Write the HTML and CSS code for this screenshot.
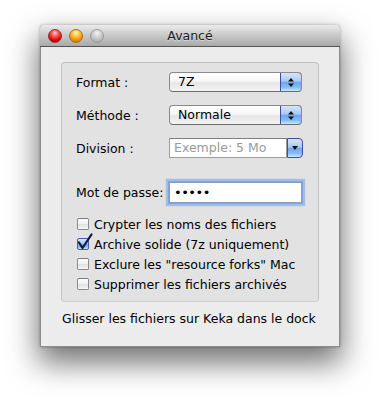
FILE: index.html
```html
<!DOCTYPE html>
<html lang="fr">
<head>
    <meta charset="UTF-8">
    <meta name="viewport" content="width=device-width, initial-scale=1.0">
    <title>Avancé</title>
    <link rel="stylesheet" href="styles.css">
</head>
<body>
    <div class="window">
        <div class="titlebar">
            <div class="lights">
                <span class="light close"></span>
                <span class="light mini"></span>
                <span class="light zoom"></span>
            </div>
            <div class="title">Avancé</div>
            <div></div>
        </div>
        <div class="content">
            <div class="group">
                <div class="row">
                    <span class="label">Format :</span>
                    <div class="popup">
                        <span class="popup-value">7Z</span>
                        <span class="stepper">
                            <svg width="8" height="11" viewBox="0 0 8 11"><path d="M4 1 L7 4.5 L1 4.5 Z M1 6.5 L7 6.5 L4 10 Z" fill="#111"/></svg>
                        </span>
                    </div>
                </div>
                <div class="row">
                    <span class="label">Méthode :</span>
                    <div class="popup">
                        <span class="popup-value">Normale</span>
                        <span class="stepper">
                            <svg width="8" height="11" viewBox="0 0 8 11"><path d="M4 1 L7 4.5 L1 4.5 Z M1 6.5 L7 6.5 L4 10 Z" fill="#111"/></svg>
                        </span>
                    </div>
                </div>
                <div class="row">
                    <span class="label">Division :</span>
                    <div class="combo">
                        <span class="combo-field">Exemple: 5 Mo</span>
                        <span class="combo-btn">
                            <svg width="8" height="6" viewBox="0 0 8 6"><path d="M1 1 L7 1 L4 5 Z" fill="#111"/></svg>
                        </span>
                    </div>
                </div>
                <div class="row row-pass">
                    <span class="label">Mot de passe:</span>
                    <input class="pass" type="password" value="abcde" readonly>
                </div>
                <div class="checks">
                    <label class="check"><span class="box"></span>Crypter les noms des fichiers</label>
                    <label class="check"><span class="box checked"><svg class="tick" width="20" height="20" viewBox="0 0 20 20"><path d="M5 10.5 L8.5 16 L17.5 2.5" fill="none" stroke="#101a3c" stroke-width="2.2" stroke-linecap="round" stroke-linejoin="round"/></svg></span>Archive solide (7z uniquement)</label>
                    <label class="check"><span class="box"></span>Exclure les "resource forks" Mac</label>
                    <label class="check"><span class="box"></span>Supprimer les fichiers archivés</label>
                </div>
            </div>
            <p class="hint">Glisser les fichiers sur Keka dans le dock</p>
        </div>
    </div>
</body>
</html>
```

FILE: styles.css
```css
body {
    font-family: "DejaVu Sans", Verdana, sans-serif;
    font-size: 12.5px;
    color: #000;
    background-color: #fff;
    margin: 0;
    padding: 25px 0 0 40px;
    min-height: 402px;
    box-sizing: border-box;
}

.window {
    width: 300px;
    height: 322px;
    box-sizing: border-box;
    background: #ececec;
    border: 1px solid #8c8c8c;
    border-top: none;
    border-radius: 4px 4px 0 0;
    box-shadow: 0 14px 30px 2px rgba(0, 0, 0, 0.55), 0 0 3px rgba(0, 0, 0, 0.3);
}

.titlebar {
    display: grid;
    grid-template-columns: 1fr auto 1fr;
    align-items: center;
    height: 21px;
    margin: 0 -1px;
    padding: 0 8px;
    background: linear-gradient(#ebebeb, #c8c8c8 50%, #a9a9a9);
    border-bottom: 1px solid #545454;
    border-radius: 4px 4px 0 0;
}

.lights {
    display: flex;
    gap: 7px;
}

.light {
    width: 14px;
    height: 14px;
    border-radius: 50%;
    box-sizing: border-box;
}

.light.close {
    background: radial-gradient(circle at 50% 25%, #ffd0d0 0, #ff5a5a 30%, #d10000 70%, #8e0000 100%);
    border: 1px solid #9a2a2a;
}

.light.mini {
    background: radial-gradient(circle at 50% 25%, #fff0c0 0, #ffc23a 35%, #e08400 75%, #a05a00 100%);
    border: 1px solid #a8701a;
}

.light.zoom {
    background: radial-gradient(circle at 50% 25%, #f4f4f4 0, #d4d4d4 35%, #b4b4b4 75%, #8e8e8e 100%);
    border: 1px solid #9a9a9a;
}

.title {
    font-size: 12.5px;
    color: #1c1c1c;
    text-shadow: 0 1px 0 rgba(255, 255, 255, 0.4);
}

.content {
    padding: 15px 20px 0;
}

.group {
    height: 240px;
    box-sizing: border-box;
    padding: 9px 15px 7px 14px;
    background: #e2e2e2;
    border: 1px solid #c2c2c2;
    border-bottom-color: #d0d0d0;
    border-radius: 4px;
}

.row {
    display: flex;
    align-items: center;
    height: 20px;
    margin-bottom: 13px;
}

.row:nth-child(3) {
    margin-bottom: 24px;
}

.row-pass {
    height: 21px;
    margin-bottom: 11px;
}

.label {
    width: 93px;
    flex-shrink: 0;
}

.popup {
    display: flex;
    width: 133px;
    height: 20px;
    box-sizing: border-box;
    border: 1px solid #8a8a8a;
    border-bottom-color: #6c6c6c;
    border-radius: 4px;
    background: linear-gradient(#ffffff, #f6f6f6 45%, #e6e6e6 55%, #f4f4f4);
    overflow: hidden;
}

.popup-value {
    flex: 1;
    padding-left: 8px;
    line-height: 18px;
}

.stepper, .combo-btn {
    display: flex;
    align-items: center;
    justify-content: center;
    width: 20px;
    background: linear-gradient(#d6e6fb, #a8c9f3 45%, #6fa6ec 52%, #86bdf5 80%, #c6ecff);
    border-left: 1px solid #6a7fb8;
}

.popup .stepper {
    margin: -1px -1px -1px 0;
    border: 1px solid #4747a6;
    border-radius: 0 4px 4px 0;
}

.combo {
    display: flex;
    width: 134px;
    height: 20px;
}

.combo-field {
    flex: 1;
    box-sizing: border-box;
    padding-left: 4px;
    line-height: 18px;
    color: #9a9a9a;
    background: #fff;
    border: 1px solid #9d9d9d;
    border-top-color: #7d7d7d;
}

.combo-btn {
    width: 16px;
    box-sizing: border-box;
    border: 1px solid #4747a6;
    border-radius: 0 4px 4px 0;
}

.pass {
    width: 133px;
    height: 21px;
    box-sizing: border-box;
    margin: 0;
    padding: 0 4px;
    font-family: "DejaVu Sans", Verdana, sans-serif;
    font-size: 13px;
    letter-spacing: -0.5px;
    color: #000;
    background: #fff;
    border: 1px solid #8a9cc0;
    box-shadow: 0 0 0 1px #7fa6e0, 0 0 1px 3px rgba(110, 160, 230, 0.55);
    outline: none;
}

.checks {
    display: flex;
    flex-direction: column;
}

.check {
    display: flex;
    align-items: center;
    height: 20px;
}

.box {
    position: relative;
    width: 12px;
    height: 12px;
    box-sizing: border-box;
    margin: 0 5px 0 1px;
    border: 1px solid #8a8a8a;
    border-top-color: #7a7a7a;
    border-radius: 2px;
    background: linear-gradient(#fdfdfd, #f0f0f0 50%, #e2e2e2 55%, #f6f6f6);
}

.box.checked {
    border-color: #4c5ca8;
    background: linear-gradient(#d6e6fb, #a8c9f3 45%, #6fa6ec 52%, #86bdf5 80%, #c6ecff);
}

.tick {
    position: absolute;
    left: -4px;
    top: -7px;
}

.hint {
    margin: 9px 0 0 1px;
    line-height: 16px;
}
```
